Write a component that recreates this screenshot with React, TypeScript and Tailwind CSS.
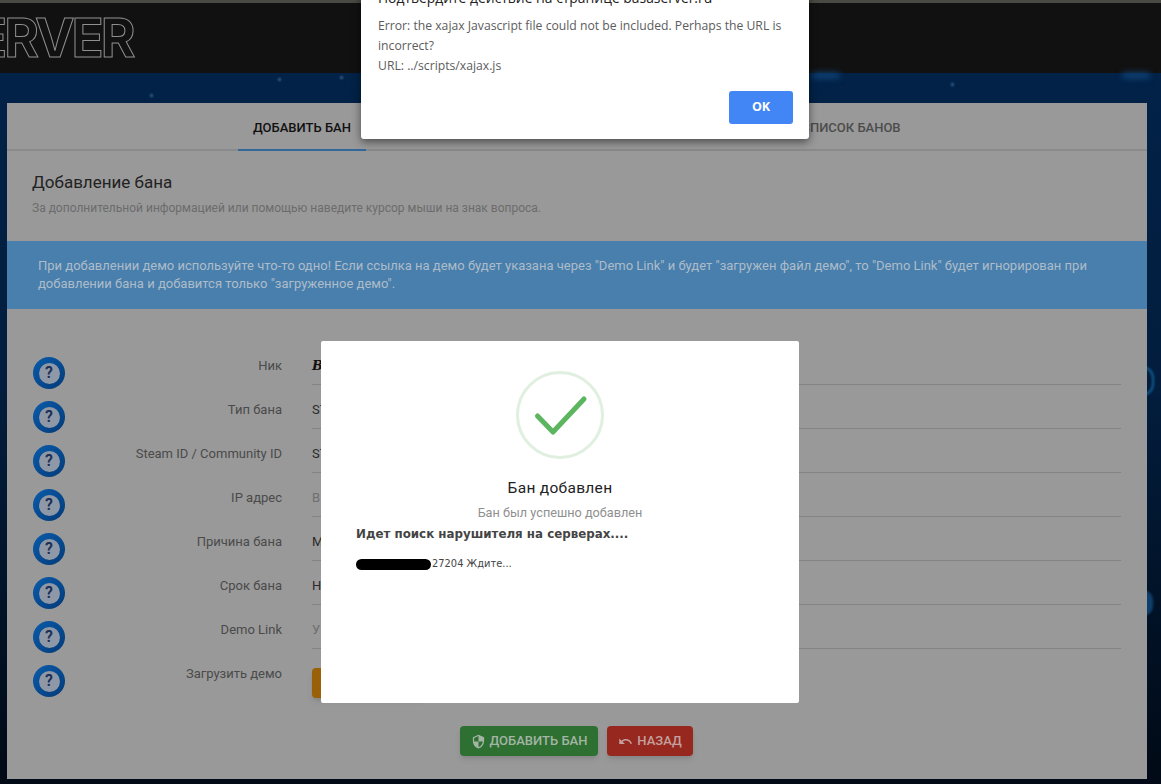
import type { ReactNode } from "react";

const rows: { label: string; value: ReactNode }[] = [
  { label: "Ник", value: <span className="font-['DejaVu_Serif',serif] font-bold italic text-[#111]">B</span> },
  { label: "Тип бана", value: "ST" },
  { label: "Steam ID / Community ID", value: "ST" },
  { label: "IP адрес", value: <span className="text-[#6e6e6e]">В</span> },
  { label: "Причина бана", value: "М" },
  { label: "Срок бана", value: "Н" },
  { label: "Demo Link", value: <span className="text-[#6e6e6e]">У</span> },
];

function HelpIcon() {
  return (
    <div className="flex h-8 w-8 items-center justify-center rounded-full bg-gradient-to-br from-[#0a5cab] to-[#043a78]">
      <div className="flex h-[21px] w-[21px] items-center justify-center rounded-full bg-[#8e98a6] text-[16px] font-semibold leading-none text-[#1a2f55]">
        ?
      </div>
    </div>
  );
}

function App() {
  return (
    <div className="relative h-[784px] w-[1161px] overflow-hidden bg-gradient-to-b from-[#02234a] via-[#021d3d] to-[#010a16] font-['Roboto',sans-serif]">
      <div className="h-[3px] bg-[#4a4a44]" />
      <header className="flex h-[70px] items-center overflow-hidden bg-[#111111]">
        <span className="ml-[-25px] whitespace-nowrap font-['Inter',sans-serif] text-[53px] font-bold leading-none tracking-[-3px] text-transparent [-webkit-text-stroke:1px_#8f8f8f]">
          ERVER
        </span>
      </header>

      {/* background sparkles */}
      <div className="absolute left-[150px] top-[94px] h-[3px] w-[3px] rounded-full bg-[#3f6f9f] blur-[1px]" />
      <div className="absolute left-[278px] top-[78px] h-[3px] w-[3px] rounded-full bg-[#3f6f9f] blur-[1px]" />
      <div className="absolute left-[340px] top-[76px] h-[3px] w-[3px] rounded-full bg-[#3f6f9f] blur-[1px]" />
      <div className="absolute left-[951px] top-[83px] h-[3px] w-[3px] rounded-full bg-[#3f6f9f] blur-[1px]" />
      <div className="absolute left-[812px] top-[73px] h-[5px] w-7 rounded-full bg-[#124a80] blur-[3px]" />
      <div className="absolute left-[1122px] top-[73px] h-[5px] w-7 rounded-full bg-[#124a80] blur-[3px]" />
      <div className="absolute left-[1130px] top-[366px] h-[30px] w-[24px] rounded-full border-2 border-[#125f94] blur-[1px]" />
      <div className="absolute left-[1133px] top-[590px] h-[26px] w-[20px] rounded-full bg-[#0e3f6c] blur-[1px]" />

      <main className="relative ml-[7px] mr-[14px] mt-[30px] flex h-[676px] flex-col bg-[#999999]">
        <nav className="flex h-[48px] justify-center border-b-2 border-[#8a8a8a]">
          <div className="h-[48px] w-[128px] border-b-2 border-[#33689b] pt-[15px] text-center text-[13px] font-medium text-[#111]">
            ДОБАВИТЬ БАН
          </div>
          <div className="w-[420px]" />
          <div className="w-[130px] pt-[15px] text-center text-[13px] font-medium text-[#4c4c4c]">СПИСОК БАНОВ</div>
        </nav>

        <div className="px-[25px] pt-[20px]">
          <h1 className="text-[17px] leading-[22px] text-[#222]">Добавление бана</h1>
          <p className="mt-[7px] text-[12px] leading-[16px] text-[#6c6c6c]">
            За дополнительной информацией или помощью наведите курсор мыши на знак вопроса.
          </p>
        </div>

        <div className="mt-[25px] h-[68px] bg-[#487fad] px-[31px] pt-[16px] text-[13px] leading-[18px] text-[#aebcc8]">
          При добавлении демо используйте что-то одно! Если ссылка на демо будет указана через "Demo Link" и будет
          "загружен файл демо", то "Demo Link" будет игнорирован при добавлении бана и добавится только "загруженное
          демо".
        </div>

        <div className="flex pl-[26px] pr-[26px]">
          <div className="flex w-[32px] shrink-0 flex-col gap-3 pt-[48px]">
            {[...rows, { label: "Загрузить демо" }].map((r) => (
              <HelpIcon key={r.label} />
            ))}
          </div>
          <div className="flex-1 pt-[32px]">
            {rows.map((r) => (
              <div key={r.label} className="flex h-[44px]">
                <div className="w-[217px] pt-[16px] text-right text-[13px] leading-[18px] text-[#4a4a4a]">{r.label}</div>
                <div className="ml-[30px] flex-1 border-b border-[#838383] pt-[16px] text-[13px] leading-[18px] text-[#2a2a2a]">
                  {r.value}
                </div>
              </div>
            ))}
            <div className="flex">
              <div className="w-[217px] pt-[16px] text-right text-[13px] leading-[18px] text-[#4a4a4a]">Загрузить демо</div>
              <div className="ml-[30px] mt-[19px] h-[30px] w-[110px] rounded-sm bg-[#9a6008] shadow-md" />
            </div>
          </div>
        </div>

        <div className="mt-[28px] flex justify-center gap-[9px] pr-[1px]">
          <button className="flex h-[30px] w-[138px] items-center justify-center gap-[4px] rounded-sm bg-[#2e6f32] text-[13px] font-medium text-[#a3b5a4] shadow-md">
            <svg viewBox="0 0 24 24" className="h-[15px] w-[15px] fill-[#a3b5a4]">
              <path d="M12 1L3 5v6c0 5.55 3.84 10.74 9 12 5.16-1.26 9-6.45 9-12V5l-9-4zm0 10.99h7c-.53 4.12-3.28 7.79-7 8.94V12H5V6.3l7-3.11v8.8z" />
            </svg>
            ДОБАВИТЬ БАН
          </button>
          <button className="flex h-[30px] w-[86px] items-center justify-center gap-[4px] rounded-sm bg-[#96281f] text-[13px] font-medium text-[#c4a09e] shadow-md">
            <svg viewBox="0 0 24 24" className="h-[15px] w-[15px] fill-[#c4a09e]">
              <path d="M12.5 8c-2.65 0-5.05.99-6.9 2.6L2 7v9h9l-3.62-3.62c1.39-1.16 3.16-1.88 5.12-1.88 3.54 0 6.55 2.31 7.6 5.5l2.37-.78C21.08 11.03 17.15 8 12.5 8z" />
            </svg>
            НАЗАД
          </button>
        </div>
      </main>

      {/* success popup */}
      <div className="absolute left-[321px] top-[341px] flex h-[362px] w-[478px] flex-col items-center rounded-[2px] bg-white pt-[30px]">
        <div className="flex h-[88px] w-[88px] items-center justify-center rounded-full border-[3px] border-[#e0efe0]">
          <svg viewBox="0 0 88 88" className="h-[88px] w-[88px] shrink-0">
            <path d="M21.5 45L37 61L68 28" fill="none" stroke="#5cb660" strokeWidth="5" strokeLinecap="round" strokeLinejoin="round" />
          </svg>
        </div>
        <h2 className="mt-[19px] text-[15.5px] leading-[20px] tracking-[0.3px] text-[#222]">Бан добавлен</h2>
        <p className="mt-[7px] text-[12.7px] leading-[16px] text-[#8f8f8f]">Бан был успешно добавлен</p>
        <div className="w-full px-[35px] pt-[5px] font-['DejaVu_Sans',sans-serif]">
          <p className="text-[11.85px] font-bold leading-[16px] text-[#444]">Идет поиск нарушителя на серверах....</p>
          <div className="mt-[16px] flex items-center text-[9.9px] leading-[12px] text-[#444]">
            <span className="h-[11px] w-[75px] rounded-full bg-black" />
            <span className="ml-px">27204 Ждите...</span>
          </div>
        </div>
      </div>

      {/* browser confirm dialog */}
      <div className="absolute left-[361px] top-[-12px] h-[151px] w-[448px] rounded-[3px] bg-white px-[17px] font-['Open_Sans',sans-serif] shadow-[0_3px_8px_rgba(0,0,0,0.5)]">
        <p className="text-[13.9px] leading-[20px] text-[#222]">Подтвердите действие на странице basaserver.ru</p>
        <p className="mt-[8px] text-[12.2px] leading-[20px] text-[#5c5c5c]">
          Error: the xajax Javascript file could not be included. Perhaps the URL is incorrect?
          <br />
          URL: ../scripts/xajax.js
        </p>
        <div className="absolute bottom-[15px] right-[16px] flex h-[33px] w-[64px] items-center justify-center rounded-[3px] bg-[#4285f4] text-[12.5px] font-bold text-white">
          OK
        </div>
      </div>
    </div>
  );
}

export default App;
